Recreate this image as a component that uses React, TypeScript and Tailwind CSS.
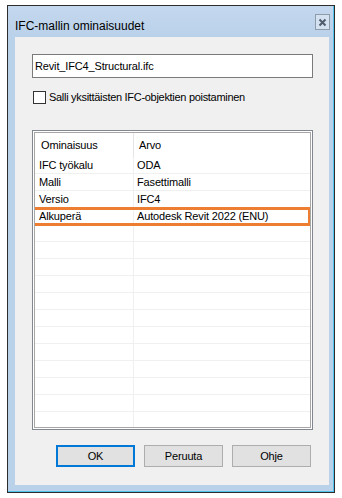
const FONT = { fontFamily: '"Liberation Sans", Arial, sans-serif' };

const ROWS: { key: string; value: string; highlight?: boolean }[] = [
  { key: "IFC työkalu", value: "ODA" },
  { key: "Malli", value: "Fasettimalli" },
  { key: "Versio", value: "IFC4" },
  { key: "Alkuperä", value: "Autodesk Revit 2022 (ENU)", highlight: true },
];

const EMPTY_ROWS = Array.from({ length: 12 }, (_, i) => i);

function CloseButton() {
  return (
    <div className="flex h-[16px] w-[15px] items-center justify-center border border-[#8d9bab] bg-[#d3e1f1]">
      <svg width="9" height="9" viewBox="0 0 9 9">
        <path d="M1.5 1.5 L7.5 7.5 M7.5 1.5 L1.5 7.5" stroke="#4f5d6c" strokeWidth="2" />
      </svg>
    </div>
  );
}

function DialogButton({ label, primary }: { label: string; primary?: boolean }) {
  return (
    <button
      className={`flex h-[22px] w-[79px] items-center justify-center bg-[#e1e1e1] text-[11px] tracking-[-0.15px] text-black ${
        primary ? "border-2 border-[#0078d7]" : "border border-[#adadad]"
      }`}
    >
      {label}
    </button>
  );
}

export default function App() {
  return (
    <div className="min-h-screen bg-white pl-[7px] pt-[5px]" style={FONT}>
      <div className="flex h-[488px] w-[328px] flex-col border border-[#2d2d2d] bg-[#bad1ea]">
        <div className="flex flex-1 flex-col border-b border-r border-[#52c3ec]">
          {/* title bar */}
          <div className="flex h-[31px] items-start justify-between bg-gradient-to-b from-[#c4d8ee] to-[#bad1ea] pl-[7px] pr-[3px]">
            <span className="pt-[13px] text-[12px] leading-[14px] text-black">IFC-mallin ominaisuudet</span>
            <div className="pt-[8px]">
              <CloseButton />
            </div>
          </div>

          {/* client area */}
          <div className="ml-[7px] mr-[4px] flex h-[448px] flex-col bg-[#f0f0f0] pl-[17px] pr-[16px] pt-[17px] text-[11px] tracking-[-0.15px] text-black">
            <div className="flex h-[24px] items-center border border-[#7a7a7a] bg-white pl-[2px]">
              Revit_IFC4_Structural.ifc
            </div>

            <label className="mt-[13px] flex h-[13px] items-center gap-[3px] pl-[1px]">
              <span className="h-[13px] w-[13px] border border-[#333333] bg-white" />
              <span className="tracking-[-0.3px]">Salli yksittäisten IFC-objektien poistaminen</span>
            </label>

            <div className="mt-[26px] h-[300px] border border-[#828790] bg-white p-px">
              <div className="h-full overflow-hidden border border-[#a7a7a7]">
                <div className="flex h-[24px]">
                  <div className="flex w-[99px] items-center border-r border-[#e5e5e5] pl-[6px]">Ominaisuus</div>
                  <div className="flex items-center pl-[5px]">Arvo</div>
                </div>
                {ROWS.map((row) => (
                  <div key={row.key} className="relative flex h-[17px] border-b border-[#f0f0f0]">
                    <div className="flex w-[99px] items-center border-r border-[#f0f0f0] pl-[4px]">{row.key}</div>
                    <div className="flex items-center pl-[3px]">{row.value}</div>
                    {row.highlight && (
                      <div className="absolute -bottom-[2px] -left-[3px] -right-[1px] -top-[1px] border-[3px] border-[#ed7d31]" />
                    )}
                  </div>
                ))}
                {EMPTY_ROWS.map((i) => (
                  <div key={i} className="flex h-[17px] border-b border-[#f0f0f0]">
                    <div className="w-[99px] border-r border-[#f0f0f0]" />
                  </div>
                ))}
              </div>
            </div>

            <div className="mt-[15px] flex gap-[9px] pl-[24px]">
              <DialogButton label="OK" primary />
              <DialogButton label="Peruuta" />
              <DialogButton label="Ohje" />
            </div>
          </div>
        </div>
      </div>
    </div>
  );
}
